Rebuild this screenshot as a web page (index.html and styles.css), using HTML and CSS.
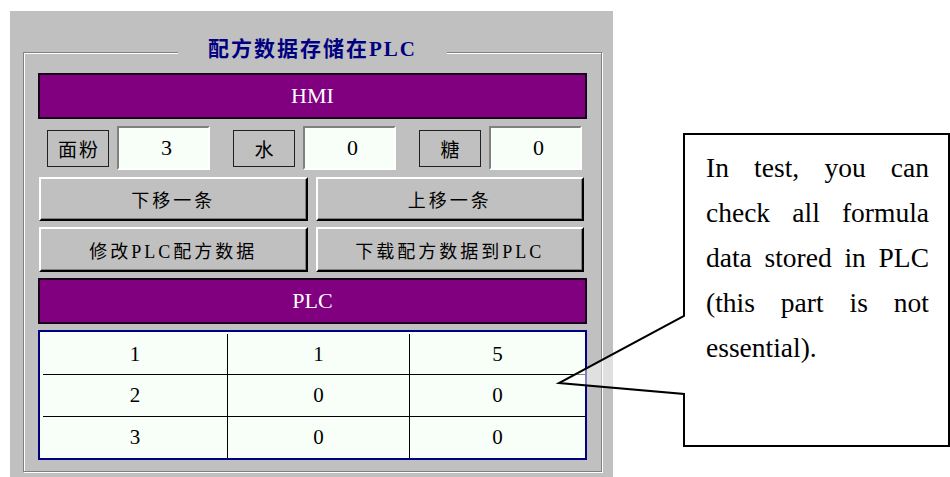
FILE: index.html
```html
<!DOCTYPE html>
<html lang="zh-CN">
<head>
    <meta charset="UTF-8">
    <meta name="viewport" content="width=device-width, initial-scale=1.0">
    <title>配方数据存储在PLC</title>
    <link rel="stylesheet" href="styles.css">
</head>
<body>
    <div class="page">
        <section class="panel">
            <fieldset class="group">
                <legend class="group-title">配方数据存储在PLC</legend>

                <div class="bar">HMI</div>

                <div class="fields">
                    <div class="field"><span class="tag">面粉</span><span class="value">3</span></div>
                    <div class="field"><span class="tag">水</span><span class="value">0</span></div>
                    <div class="field"><span class="tag">糖</span><span class="value">0</span></div>
                </div>

                <div class="buttons">
                    <button class="btn">下移一条</button>
                    <button class="btn">上移一条</button>
                </div>
                <div class="buttons tall">
                    <button class="btn">修改PLC配方数据</button>
                    <button class="btn">下载配方数据到PLC</button>
                </div>

                <div class="bar">PLC</div>

                <div class="grid">
                    <span>1</span><span>1</span><span>5</span>
                    <span>2</span><span>0</span><span>0</span>
                    <span>3</span><span>0</span><span>0</span>
                </div>
            </fieldset>
        </section>

        <!-- nota explicativa sobre a tabela -->
        <div class="callout">
            <svg width="395" height="320" viewBox="0 0 395 320">
                <path d="M129 186 L129 4 L394 4 L394 316 L129 316 L129 264 L4 253 Z"
                      fill="rgba(255,255,255,0.5)" stroke="#000" stroke-width="2" stroke-linejoin="miter"/>
            </svg>
            <p class="note">In test, you can check all formula data stored in PLC (this part is not essential).</p>
        </div>
    </div>
</body>
</html>
```

FILE: styles.css
```css
/* Estilo geral */
* {
    box-sizing: border-box;
}

body {
    margin: 0;
    background-color: #fff;
    font-family: "Liberation Serif", "Noto Sans CJK SC", serif;
    overflow: hidden;
}

.page {
    position: relative;
    height: 477px;
    padding: 11px 0 0 10px;
    overflow: hidden;
}

/* Painel cinza */
.panel {
    width: 603px;
    height: 480px;
    background-color: #c0c0c0;
    padding: 28px 11px 0 13px;
}

.group {
    margin: 0;
    padding: 8px 14px 11px;
    border: 1px solid #808080;
    box-shadow: inset 1px 1px 0 #fff, 1px 1px 0 #fff;
    display: flex;
    flex-direction: column;
    gap: 6px;
    min-width: 0;
}

.group-title {
    margin: 0 auto;
    padding: 0 30px 6px;
    background-color: #c0c0c0;
    color: #000080;
    font-size: 21px;
    line-height: 20px;
    font-weight: bold;
    letter-spacing: 2px;
}

.bar {
    height: 46px;
    background-color: #800080;
    border: 2px solid #1a001a;
    color: #fff;
    display: flex;
    align-items: center;
    justify-content: center;
    font-size: 22px;
}

/* Linha dos campos */
.fields {
    height: 46px;
    display: flex;
    align-items: center;
    gap: 23px;
    padding-left: 9px;
}

.field {
    display: flex;
    align-items: center;
    gap: 8px;
}

.tag {
    width: 62px;
    height: 37px;
    border: 1px solid #202020;
    display: flex;
    align-items: center;
    justify-content: center;
    font-size: 19px;
    letter-spacing: 2px;
    padding-left: 2px;
}

.value {
    width: 93px;
    height: 44px;
    background-color: #f8fff8;
    border-top: 2px solid #808080;
    border-left: 2px solid #808080;
    border-right: 2px solid #fff;
    border-bottom: 2px solid #fff;
    display: flex;
    align-items: center;
    justify-content: center;
    font-size: 22px;
    padding-left: 6px;
}

/* Botões */
.buttons {
    height: 44px;
    display: grid;
    grid-template-columns: 1fr 1fr;
    gap: 8px;
    padding: 0 3px 0 1px;
}

.buttons.tall {
    height: 45px;
}

.btn {
    font-family: inherit;
    font-size: 18px;
    letter-spacing: 3px;
    color: #000;
    background-color: #c0c0c0;
    border-top: 2px solid #fff;
    border-left: 2px solid #fff;
    border-right: 2px solid #000;
    border-bottom: 2px solid #000;
    box-shadow: inset -1px -1px 0 #808080;
    padding: 0;
}

/* Tabela PLC */
.grid {
    height: 130px;
    border: 2px solid #000080;
    background-color: #f8fff8;
    padding: 2px 0 0 3px;
    display: grid;
    grid-template-columns: 185px 182px 1fr;
    grid-template-rows: repeat(3, 1fr);
    font-size: 21px;
}

.grid span {
    display: flex;
    align-items: center;
    justify-content: center;
}

.grid span:nth-child(3n+1),
.grid span:nth-child(3n+2) {
    border-right: 1px solid #000;
}

.grid span:nth-child(-n+6) {
    border-bottom: 1px solid #000;
}

/* Balão de comentário */
.callout {
    position: absolute;
    left: 555px;
    top: 130px;
    width: 395px;
    height: 320px;
}

.callout svg {
    display: block;
}

.note {
    position: absolute;
    left: 151px;
    top: 15px;
    width: 223px;
    margin: 0;
    font-family: "Liberation Serif", serif;
    font-size: 27.5px;
    line-height: 45px;
    text-align: justify;
    color: #000;
}
```
